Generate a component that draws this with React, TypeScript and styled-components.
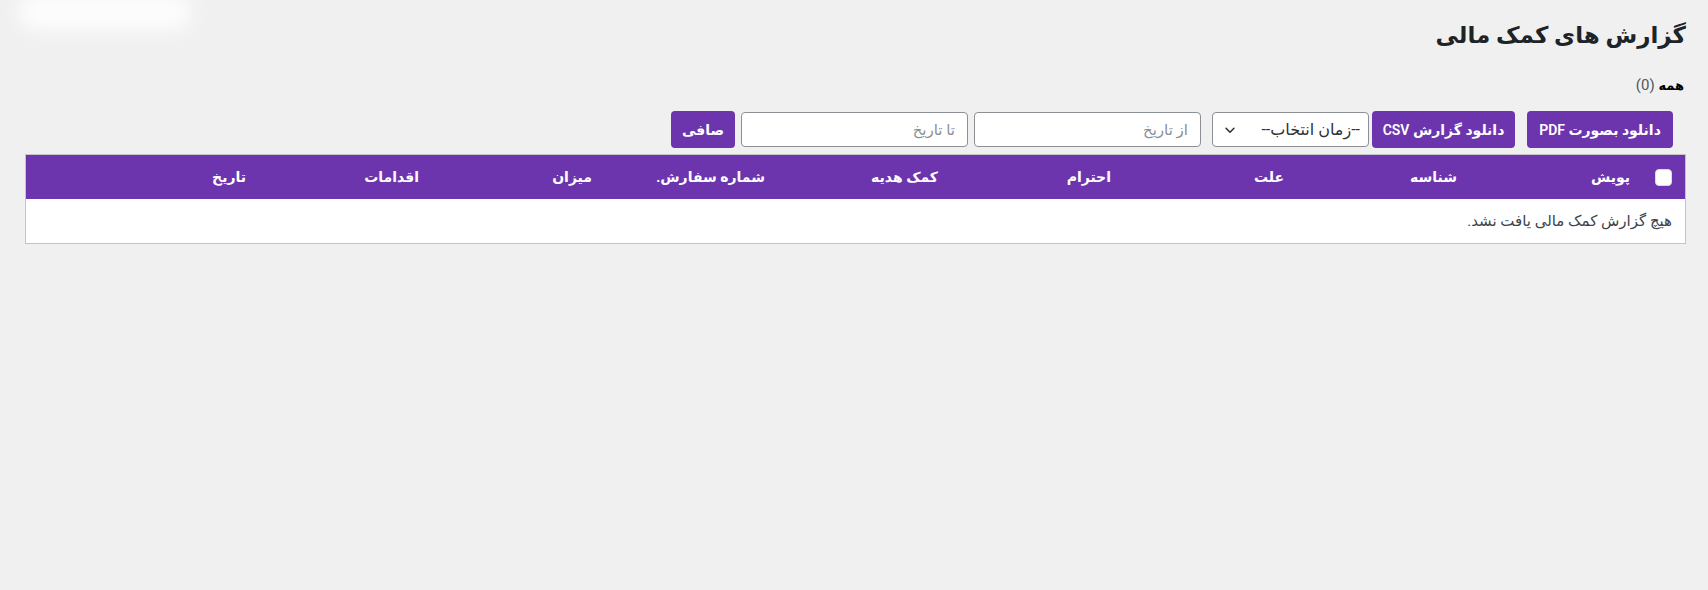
import React from 'react';
import styled, { createGlobalStyle } from 'styled-components';

const GlobalStyle = createGlobalStyle`
html, body {
  margin: 0;
  background: #f0f0f1;
}
body {
  font-family: Roboto, "DejaVu Sans", sans-serif;
  color: #1d2327;
}
`

const purple = '#6c35ad'

const Page = styled.div`
position: relative;
direction: rtl;
padding: 0 22px 0 22px;
min-height: 590px;
box-sizing: border-box;
`

const BlurredNotice = styled.div`
position: absolute;
left: 20px;
top: -6px;
width: 170px;
height: 36px;
background: #ffffff;
border-radius: 12px;
filter: blur(9px);
opacity: 0.85;
`

const Title = styled.h1`
margin: 0;
padding-top: 21px;
font-size: 23px;
line-height: 30px;
font-weight: 700;
color: #1d2327;
`

const Views = styled.div`
margin-top: 24px;
font-size: 15px;
line-height: 20px;
padding-right: 2px;
color: #50575e;

b {
  color: #000;
  font-weight: 700;
  font-size: 13px;
}
`

const Toolbar = styled.div`
display: flex;
align-items: center;
margin-top: 15px;
padding-right: 13px;
height: 37px;
`

const PurpleButton = styled.button<{ $width: number; $gap?: number }>`
box-sizing: border-box;
width: ${p => p.$width}px;
height: 37px;
padding: 0;
margin-left: ${p => p.$gap ?? 0}px;
background: ${purple};
color: #fff;
border: none;
border-radius: 4px;
font-family: Roboto, "DejaVu Sans", sans-serif;
font-size: 14px;
font-weight: 600;
white-space: nowrap;
cursor: pointer;
`

const FakeSelect = styled.div`
display: flex;
align-items: center;
justify-content: space-between;
box-sizing: border-box;
width: 157px;
height: 35px;
margin-left: 11px;
padding: 0 8px 0 10px;
background: #fff;
border: 1px solid #8c8f94;
border-radius: 4px;
font-size: 16px;
color: #2c3338;
white-space: nowrap;
`

const DateInput = styled.input`
box-sizing: border-box;
width: 227px;
height: 35px;
margin-left: 6px;
padding: 0 12px;
background: #fff;
border: 1px solid #8c8f94;
border-radius: 4px;
font-family: Roboto, "DejaVu Sans", sans-serif;
font-size: 15px;
direction: rtl;

&::placeholder {
  color: #8c8f94;
}
`

const Table = styled.div`
margin-top: 6px;
margin-left: 3px;
border: 1px solid #c3c4c7;
background: #fff;
`

const HeadRow = styled.div`
display: grid;
grid-template-columns: 45px repeat(8, 173px) 1fr;
align-items: center;
height: 44px;
background: ${purple};
`

const HeadCell = styled.div`
padding: 0 10px;
color: #fff;
font-size: 14px;
font-weight: 700;
white-space: nowrap;
`

const CheckCell = styled.div`
display: flex;
padding-right: 13px;
`

const CheckBox = styled.span`
display: block;
width: 17px;
height: 17px;
background: #fff;
border: 1px solid #dcdcde;
border-radius: 4px;
box-sizing: border-box;
`

const EmptyRow = styled.div`
height: 44px;
display: flex;
align-items: center;
padding-right: 13px;
font-size: 15px;
color: #3c434a;
`

const columns = ['پویش', 'شناسه', 'علت', 'احترام', 'کمک هدیه', 'شماره سفارش.', 'میزان', 'اقدامات', 'تاریخ']

function Chevron() {
  return (
    <svg width="14" height="14" viewBox="0 0 16 16" fill="none">
      <path d="M3.5 6 L8 10.5 L12.5 6" stroke="#2c3338" strokeWidth="1.8" strokeLinecap="round" strokeLinejoin="round" />
    </svg>
  )
}

function App() {
  return (
    <>
      <GlobalStyle />
      <Page>
        <BlurredNotice />
        <Title>گزارش های کمک مالی</Title>
        <Views><b>همه</b> (0)</Views>
        <Toolbar>
          <PurpleButton $width={146} $gap={12}>دانلود بصورت PDF</PurpleButton>
          <PurpleButton $width={143} $gap={3}>دانلود گزارش CSV</PurpleButton>
          <FakeSelect>
            <span>--زمان انتخاب--</span>
            <Chevron />
          </FakeSelect>
          <DateInput placeholder="از تاریخ" />
          <DateInput placeholder="تا تاریخ" />
          <PurpleButton $width={64}>صافی</PurpleButton>
        </Toolbar>
        <Table>
          <HeadRow>
            <CheckCell><CheckBox /></CheckCell>
            {columns.map(c => <HeadCell key={c}>{c}</HeadCell>)}
          </HeadRow>
          <EmptyRow>هیچ گزارش کمک مالی یافت نشد.</EmptyRow>
        </Table>
      </Page>
    </>
  );
}

export default App;
